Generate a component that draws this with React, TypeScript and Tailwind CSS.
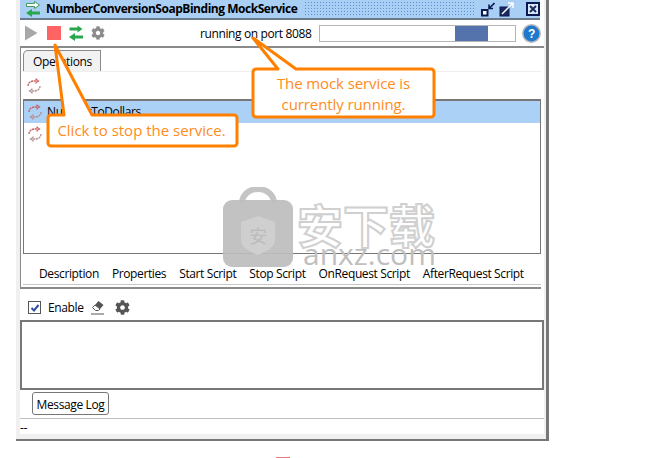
import { FaCog } from "react-icons/fa";

const SwapIcon = ({ outline = false }: { outline?: boolean }) => (
    <svg width="14" height="16" viewBox="0 0 14 16">
        <path
            d="M0.500 2.500h8V0.500l5 3.500-5 3.500V5.500h-8z"
            fill={outline ? "#fff" : "#2aa64c"}
            stroke={outline ? "#3f9c5a" : "none"}
            strokeWidth="1"
        />
        <path d="M14 10.500H6V8l-6 4 6 4v-2.500h8z" fill="#2aa64c" />
    </svg>
);

const CycleIcon = () => (
    <svg width="16" height="16" viewBox="0 0 16 16" fill="none">
        <path d="M2 8c0-3 2.500-5 5.500-5H12M9.500 0.800L12.500 3l-3 2.200" stroke="#c9605f" strokeWidth="1.300" strokeDasharray="2.200 0.600" />
        <path d="M14 8c0 3-2.500 5-5.500 5H4M6.500 10.800L3.500 13l3 2.200" stroke="#b58e8e" strokeWidth="1.300" strokeDasharray="2.200 0.600" />
    </svg>
);

const tabs = ["Description", "Properties", "Start Script", "Stop Script", "OnRequest Script", "AfterRequest Script"];

export default function App() {
    return (
        <div className="relative w-[663px] h-[458px] overflow-hidden bg-white text-[12px] tracking-[-0.38px] text-black font-['Open_Sans','Noto_Sans',sans-serif]">
            {/* window */}
            <div className="ml-4 w-[533px] h-[441px] bg-[#f0f0f0] pl-1 pr-[2px] pb-[5px] border-r-[3px] border-b-2 border-[#777777] flex flex-col">
                <div className="flex-1 bg-white flex flex-col min-h-0">
                    {/* title bar */}
                    <div className="h-5 shrink-0 mr-1 flex items-center bg-[#a9cff5] border-b-2 border-[#6b7a88] pl-[6px]">
                        <SwapIcon outline />
                        <span className="ml-[6px] w-[252px] font-bold text-[12px] tracking-[-0.47px] whitespace-nowrap">NumberConversionSoapBinding MockService</span>
                        <div className="ml-[6px] w-[170px] h-4 bg-[radial-gradient(#5b8fd0_1px,transparent_1px)] bg-[length:3px_3px]" />
                        <div className="ml-[7px] flex items-center">
                            <svg width="14" height="15" viewBox="0 0 14 15">
                                <rect x="1" y="8" width="5.500" height="5.500" fill="#fff" stroke="#0a1a50" strokeWidth="2" />
                                <path d="M13.500 1L8 6.500M8 2.500v4h4" stroke="#0a1a50" strokeWidth="1.600" fill="none" />
                            </svg>
                            <svg className="ml-1" width="15" height="15" viewBox="0 0 15 15">
                                <rect x="1" y="5" width="9" height="9" fill="#1a2a60" stroke="#0a1a50" />
                                <path d="M3 12L13 2M9 1h5v5" stroke="#fff" strokeWidth="1.500" fill="none" />
                            </svg>
                            <svg className="ml-3" width="14" height="14" viewBox="0 0 14 14">
                                <rect x="1" y="1" width="12" height="12" fill="#dbe8f7" stroke="#0a1a50" strokeWidth="2" />
                                <path d="M4 4l6 6M10 4l-6 6" stroke="#1a2a60" strokeWidth="2" />
                            </svg>
                        </div>
                    </div>
                    {/* toolbar */}
                    <div className="h-[28px] shrink-0 flex items-center border-b-2 border-[#8a8a8a] pl-[5px]">
                        <svg width="13" height="16" viewBox="0 0 13 16"><path d="M0 0.500l12.500 7.500-12.500 7.500z" fill="#a8a8a8" /></svg>
                        <div className="ml-[9px] w-[14px] h-[14px] bg-[#ff6464]" />
                        <div className="ml-2 flex"><SwapIcon /></div>
                        <FaCog className="ml-2 w-[14px] h-[14px] text-[#8c8c8c]" />
                        <span className="ml-[95px] w-[111px] pt-[2px] whitespace-nowrap">running on port 8088</span>
                        <div className="ml-2 w-[197px] h-[17px] border border-[#b5b5b5] flex justify-end pr-[27px]">
                            <div className="w-[33px] bg-[#5472ab]" />
                        </div>
                        <svg className="ml-[6px]" width="19" height="19" viewBox="0 0 19 19">
                            <circle cx="9.500" cy="9.500" r="8.700" fill="#1f78cc" stroke="#b8b8b8" strokeWidth="1.500" />
                            <text x="9.500" y="14" textAnchor="middle" fontSize="12" fontWeight="700" fill="#fff" fontFamily="Liberation Sans">?</text>
                        </svg>
                    </div>
                    {/* operations panel */}
                    <div className="h-[241px] shrink-0 mr-[3px] border-l border-b-2 border-[#8a8a8a] flex flex-col pl-[2px] pb-[2px]">
                        <div className="h-[23px] shrink-0 pt-[2px]">
                            <div className="w-[78px] h-[21px] bg-[#f2f2f2] border border-b-0 border-[#8a8a8a] rounded-tl-[5px] flex items-center pl-[9px] pt-[2px]">Operations</div>
                        </div>
                        <div className="h-[28px] shrink-0 border-t border-[#eeeeee] flex items-center pl-[3px]"><CycleIcon /></div>
                        <div className="h-[155px] shrink-0 border border-t-2 border-[#777777] flex flex-col">
                            <div className="h-[22px] shrink-0 bg-[#abd1f7] flex items-center pl-[3px]">
                                <CycleIcon />
                                <span className="ml-1">NumberToDollars</span>
                            </div>
                            <div className="h-[22px] shrink-0 flex items-center pl-[3px]"><CycleIcon /></div>
                        </div>
                        <div className="flex items-center pl-4 pt-[10px] gap-[13px] flex-1 border-b border-[#c8c8c8] whitespace-nowrap">
                            {tabs.map((t) => <span key={t}>{t}</span>)}
                        </div>
                    </div>
                    {/* enable row */}
                    <div className="h-[31px] shrink-0 flex items-center pl-2 pt-[6px]">
                        <div className="w-[13px] h-[13px] border border-[#555555] flex items-center justify-center">
                            <svg width="10" height="10" viewBox="0 0 10 10"><path d="M1.500 5l2.500 2.500L8.500 2" stroke="#2f4f9f" strokeWidth="2" fill="none" /></svg>
                        </div>
                        <span className="ml-[7px]">Enable</span>
                        <svg className="ml-[6px]" width="15" height="15" viewBox="0 0 15 15">
                            <path d="M8.500 1l5 4-3.500 4-5-4z" fill="#555555" />
                            <path d="M5 5l5 4-1.500 1.500H5.500L2.500 7.500z" fill="#fff" stroke="#555555" />
                            <path d="M1 14h13" stroke="#555555" />
                        </svg>
                        <FaCog className="ml-[10px] w-[15px] h-[15px] text-[#555555]" />
                    </div>
                    {/* log area */}
                    <div className="h-[70px] shrink-0 border-2 border-[#777777]" />
                    <div className="h-[29px] shrink-0 border-b border-[#c0c0c0] pl-3 pt-[2px]">
                        <div className="w-[77px] h-[23px] border border-[#777777] rounded-[3px] flex items-center justify-center pt-[2px] whitespace-nowrap">Message Log</div>
                    </div>
                    <div className="pt-[1px] leading-[16px]">--</div>
                </div>
            </div>

            {/* watermark */}
            <svg className="absolute left-[222px] top-[187px] pointer-events-none" width="72" height="80" viewBox="0 0 72 80">
                <path d="M20 16a16 14 0 0 1 32 0" fill="none" stroke="#c4c4c4" strokeWidth="6" />
                <rect x="1" y="13" width="70" height="67" rx="9" fill="#bdbdbd" fillOpacity="0.92" />
                <path d="M36 29l17 6v18c0 8-10 12-17 15-7-3-17-7-17-15V35z" fill="#cfcfcf" />
                <text x="36" y="56" textAnchor="middle" fontSize="18" fill="#bcbcbc" fontFamily="Noto Sans CJK SC">安</text>
            </svg>
            <div className="absolute left-[297px] top-[205px] text-white text-[46px] leading-[36px] tracking-normal font-bold font-['Noto_Sans_CJK_SC',sans-serif] [-webkit-text-stroke:2px_#d0d0d0] whitespace-nowrap">安下载</div>
            <div className="absolute left-[303px] top-[244px] text-[#bfbfbf] text-[30px] leading-[20px] tracking-normal font-['Open_Sans',sans-serif] whitespace-nowrap">anxz.com</div>

            {/* callouts */}
            <svg className="absolute left-0 top-0 pointer-events-none" width="663" height="458" viewBox="0 0 663 458" fill="none">
                <path d="M64 115L55 45L92 115H234a3 3 0 0 1 3 3V143a3 3 0 0 1-3 3H51a3 3 0 0 1-3-3V118a3 3 0 0 1 3-3z" fill="#fff" stroke="#ff8000" strokeWidth="3" strokeLinejoin="round" />
                <path d="M278 69L253 38L296 69H431a3 3 0 0 1 3 3V114a3 3 0 0 1-3 3H256a3 3 0 0 1-3-3V72a3 3 0 0 1 3-3z" fill="#fff" stroke="#ff8000" strokeWidth="3" strokeLinejoin="round" />
            </svg>
            <div className="absolute left-[48px] top-[115px] w-[187px] h-[30px] flex items-center justify-center tracking-normal text-[#ff8c1a] text-[15px] whitespace-nowrap">Click to stop the service.</div>
            <div className="absolute left-[254px] top-[73px] w-[179px] text-center tracking-[-0.1px] text-[#ff8c1a] text-[15px] leading-[21px]">The mock service is<br />currently running.</div>

            {/* stray bit below the window */}
            <div className="absolute left-[276px] top-[457px] w-[14px] h-px bg-[#e87878]" />
        </div>
    );
}
